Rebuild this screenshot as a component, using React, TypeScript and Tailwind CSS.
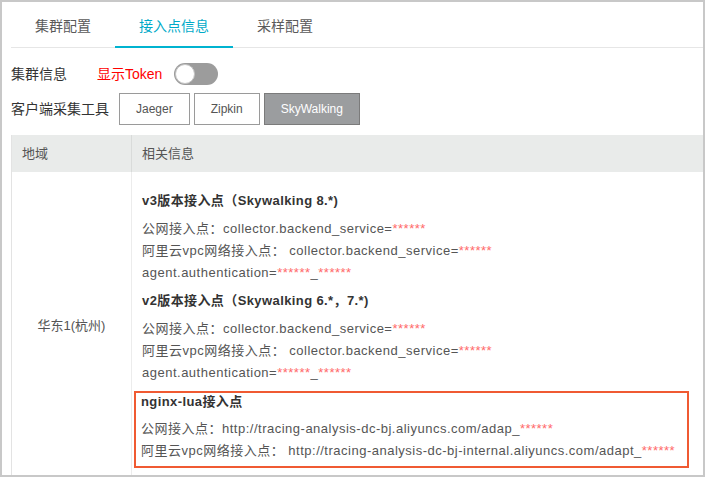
import React from 'react';

const FONT = '"Liberation Sans", "Noto Sans CJK SC", sans-serif';

function Stars({ className = '' }: { className?: string }) {
  return <span className={`text-[#ff6a6a] ${className}`}>******</span>;
}

function Line({ label, value, tail }: { label: string; value: string; tail?: React.ReactNode }) {
  return (
    <div className="h-[22px] leading-[22px] whitespace-nowrap tracking-[0.5px]">
      <span>{label}</span>
      <span>{value}</span>
      {tail ?? <Stars />}
    </div>
  );
}

function Section({ title, children }: { title: string; children: React.ReactNode }) {
  return (
    <div className="mb-[6px]">
      <div className="h-[22px] leading-[22px] mb-[6px] font-bold text-[#333] whitespace-nowrap">{title}</div>
      {children}
    </div>
  );
}

export default function App() {
  const tabs = ['集群配置', '接入点信息', '采样配置'];
  const active = 1;
  const tools = ['Jaeger', 'Zipkin', 'SkyWalking'];

  return (
    <div
      className="w-[705px] h-[477px] overflow-hidden bg-white border-2 border-[#c8c8c8] pl-[9px]"
      style={{ fontFamily: FONT }}
    >
      {/* Tabs */}
      <div className="flex border-b border-[#e6e6e6] h-[46px]">
        {tabs.map((t, i) => (
          <div
            key={t}
            className={`h-[46px] pt-1 px-6 flex items-center text-[14px] border-b-2 -mb-px ${
              i === active ? 'border-[#00b3d0] text-[#00aac8]' : 'border-transparent text-[#5a5a5a]'
            }`}
          >
            {t}
          </div>
        ))}
      </div>

      {/* Cluster info */}
      <div className="mt-[15px] flex items-center h-[22px] text-[14px]">
        <span className="w-[86px] text-[#333]">集群信息</span>
        <span className="text-[#ff0000] mr-3">显示Token</span>
        <div className="relative w-[44px] h-[22px] rounded-full bg-[#9c9c9c]">
          <div className="absolute left-[1px] top-[1px] w-[20px] h-[20px] rounded-full bg-white border border-[#c4c4c4]" />
        </div>
      </div>

      {/* Client tools */}
      <div className="mt-[8px] flex items-center h-[32px]">
        <span className="w-[108px] text-[14px] text-[#333]">客户端采集工具</span>
        <div className="flex gap-1">
          {tools.map((t, i) => (
            <div
              key={t}
              className={`h-[32px] px-4 flex items-center text-[12px] border ${
                i === 2 ? 'bg-[#9b9d9f] border-[#7b7b7b] text-white' : 'bg-white border-[#9a9a9a] text-[#555]'
              }`}
            >
              {t}
            </div>
          ))}
        </div>
      </div>

      {/* Table */}
      <div className="mt-[10px] border-l border-[#e3e3e3] text-[13px]">
        <div className="flex h-[37px] bg-[#e9ebea] text-[#555]">
          <div className="w-[120px] px-[10px] flex items-center border-r border-[#d9dbda]">地域</div>
          <div className="flex-1 px-[10px] flex items-center">相关信息</div>
        </div>
        <div className="flex">
          <div className="w-[120px] shrink-0 border-r border-[#ececec] flex items-center justify-center text-[#555]">
            华东1(杭州)
          </div>
          <div className="flex-1 pl-[10px] pt-[18px] pb-3 text-[#555] tracking-[0.4px]">
            <Section title="v3版本接入点（Skywalking 8.*)">
              <Line label="公网接入点：" value="collector.backend_service=" />
              <Line label="阿里云vpc网络接入点： " value="collector.backend_service=" />
              <Line
                label=""
                value="agent.authentication="
                tail={
                  <>
                    <Stars />_<Stars />
                  </>
                }
              />
            </Section>
            <Section title="v2版本接入点（Skywalking 6.*，7.*)">
              <Line label="公网接入点：" value="collector.backend_service=" />
              <Line label="阿里云vpc网络接入点： " value="collector.backend_service=" />
              <Line
                label=""
                value="agent.authentication="
                tail={
                  <>
                    <Stars />_<Stars />
                  </>
                }
              />
            </Section>
            <div className="mt-[7px] -ml-[8px] w-[555px] border-2 border-[#f05a32] pl-[5px] pb-[4px]">
              <div className="h-[18px] leading-[18px] font-bold text-[#333]">nginx-lua接入点</div>
              <div className="mt-[7px]">
                <Line label="公网接入点：" value="http://tracing-analysis-dc-bj.aliyuncs.com/adap_" />
                <Line label="阿里云vpc网络接入点： " value="http://tracing-analysis-dc-bj-internal.aliyuncs.com/adapt_" />
              </div>
            </div>
          </div>
        </div>
      </div>
    </div>
  );
}
